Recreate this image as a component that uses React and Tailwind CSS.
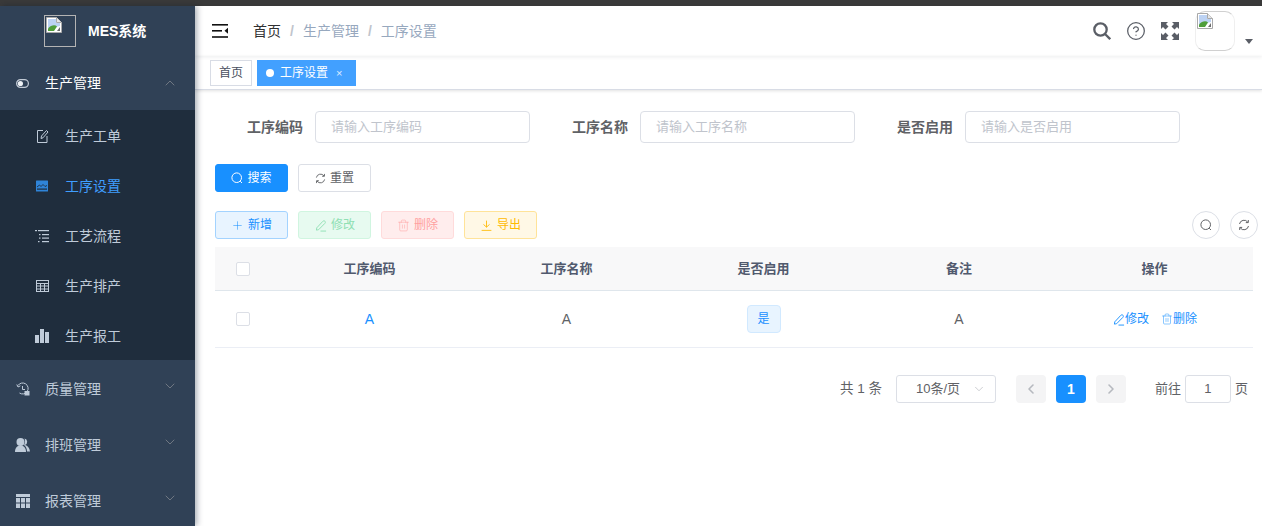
import {
  ChevronDown,
  ChevronUp,
  ChevronLeft,
  ChevronRight,
  Plus,
  Trash2,
  CircleHelp,
} from "lucide-react";

const FONT = "font-['Helvetica_Neue','Liberation_Sans','Noto_Sans_CJK_SC',sans-serif]";

function BrokenImage({ className }) {
  return (
    <svg viewBox="0 0 16 16" className={className}>
      <path d="M0.5 0.5H10.5L15.5 5.5V15.5H0.5Z" fill="#fff" stroke="#a9a9a9" />
      <path d="M10.5 0.5V5.5H15.5" fill="#e6e6e6" stroke="#a9a9a9" />
      <path d="M2 2H10V6H14V9L2 12Z" fill="#bcd2f3" />
      <path d="M2 14V11.5C5 8 9 7.5 11 9.5L8 14Z" fill="#4f9e3a" />
      <path d="M11 14L14 10V14Z" fill="#6d6d6d" />
    </svg>
  );
}

function Pen({ size = 12 }) {
  return (
    <svg width={size} height={size} viewBox="0 0 14 14" fill="none" stroke="currentColor" strokeWidth="1">
      <path d="M3 9.5L9.5 2.5C10.2 1.8 11.2 1.8 11.8 2.4C12.4 3 12.4 4 11.7 4.7L5 11.5L2.6 12Z" />
      <path d="M7 13H13" />
    </svg>
  );
}

function SearchThin({ size = 12 }) {
  return (
    <svg width={size} height={size} viewBox="0 0 12 12" fill="none" stroke="currentColor" strokeWidth="1">
      <circle cx="5.7" cy="5.7" r="4.8" />
      <path d="M9.2 9.2L11 11" />
    </svg>
  );
}

function RefreshThin({ size = 12 }) {
  return (
    <svg width={size} height={size} viewBox="0 0 12 12" fill="none" stroke="currentColor" strokeWidth="1">
      <path d="M1.5 5A4.6 4.6 0 0 1 9.8 3.2" />
      <path d="M10.5 7A4.6 4.6 0 0 1 2.2 8.8" />
      <path d="M10.3 1V3.6H7.8" />
      <path d="M1.7 11V8.4H4.2" />
    </svg>
  );
}

function DownloadThin({ size = 12 }) {
  return (
    <svg width={size} height={size} viewBox="0 0 12 12" fill="none" stroke="currentColor" strokeWidth="0.8">
      <path d="M6 1.5V7.5" />
      <path d="M3.2 5L6 7.5L8.8 5" />
      <path d="M1.5 10.5H10.5" />
    </svg>
  );
}

function ToggleIcon() {
  return (
    <svg width="13" height="9" viewBox="0 0 13 9" fill="none">
      <rect x="0.6" y="0.6" width="11.8" height="7.8" rx="3.9" stroke="#c3cbd6" strokeWidth="1.2" />
      <circle cx="4.4" cy="4.5" r="2.6" fill="#eef1f5" />
    </svg>
  );
}

function OrderIcon() {
  return (
    <svg width="13" height="15" viewBox="0 0 13 15" fill="none" stroke="#bfcbd9" strokeWidth="1">
      <path d="M7 1.5H1.5V13.5H11V7" />
      <path d="M5 9.5L5.5 7L10.5 1.5L12 3L7 8.8Z" />
    </svg>
  );
}

function ProcessIcon() {
  return (
    <svg width="12" height="12" viewBox="0 0 12 12">
      <rect width="12" height="11" y="0.5" rx="0.5" fill="#2f84d8" />
      <path d="M1 7L3.5 5L5 6.5L7 4.5L9 6.5L11 5.5" fill="none" stroke="#1f2d3d" strokeWidth="0.9" />
      <rect x="1" y="8.5" width="10" height="1.2" fill="#1f2d3d" />
    </svg>
  );
}

function FlowIcon() {
  return (
    <svg width="14" height="14" viewBox="0 0 14 14" fill="#bfcbd9">
      <rect x="0" y="1" width="2" height="1.2" />
      <rect x="3" y="1" width="11" height="1.2" />
      <rect x="4" y="5" width="1.5" height="1.2" />
      <rect x="7" y="5" width="7" height="1.2" />
      <rect x="4" y="8.5" width="1.5" height="1.2" />
      <rect x="7" y="8.5" width="7" height="1.2" />
      <rect x="3" y="12" width="1.5" height="1.2" />
      <rect x="7" y="12" width="7" height="1.2" />
    </svg>
  );
}

function PlanIcon() {
  return (
    <svg width="13" height="12" viewBox="0 0 13 12" fill="none" stroke="#bfcbd9" strokeWidth="1">
      <rect x="0.5" y="0.5" width="12" height="11" />
      <path d="M0.5 3.5H12.5M0.5 6H12.5M0.5 9H12.5M4.5 3.5V11.5M8.5 3.5V11.5" />
    </svg>
  );
}

function BarsIcon() {
  return (
    <svg width="14" height="14" viewBox="0 0 14 14" fill="#bfcbd9">
      <rect x="0" y="6" width="4" height="8" />
      <rect x="5" y="0" width="4" height="14" />
      <rect x="10" y="3" width="4" height="11" />
    </svg>
  );
}

function QualityIcon() {
  return (
    <svg width="14" height="14" viewBox="0 0 14 14" fill="none" stroke="#bfcbd9" strokeWidth="1">
      <path d="M2 3.5A5.5 5.5 0 1 1 3.5 11" />
      <path d="M0.8 2.5L2 5L4.4 3.8" />
      <path d="M6.5 4V7.5H9" />
      <rect x="8.5" y="9" width="5" height="4.5" fill="#bfcbd9" stroke="none" />
    </svg>
  );
}

function PeopleIcon() {
  return (
    <svg width="15" height="14" viewBox="0 0 15 14" fill="#bfcbd9">
      <circle cx="5.5" cy="4" r="4" />
      <path d="M0 14C0 10 2 7.5 5.5 7.5C9 7.5 11 10 11 14Z" />
      <path d="M9.5 0.5A3.4 3.4 0 0 1 10 7C12.8 7.7 14.5 10 15 13.5H12C12 10.5 10.5 8 9 7C10 6 10.5 2.5 9.5 0.5Z" />
    </svg>
  );
}

function TableIcon() {
  return (
    <svg width="14" height="14" viewBox="0 0 14 14" fill="#bfcbd9">
      <rect width="14" height="3" />
      <rect y="4" width="4" height="4.5" />
      <rect x="5" y="4" width="4" height="4.5" />
      <rect x="10" y="4" width="4" height="4.5" />
      <rect y="9.5" width="4" height="4.5" />
      <rect x="5" y="9.5" width="4" height="4.5" />
      <rect x="10" y="9.5" width="4" height="4.5" />
    </svg>
  );
}

function FullscreenIcon() {
  return (
    <svg width="18" height="18" viewBox="0 0 18 18" fill="#5a5e66">
      <path d="M0 0H7L5 2L7.5 4.5L4.5 7.5L2 5L0 7Z" />
      <path d="M18 0H11L13 2L10.5 4.5L13.5 7.5L16 5L18 7Z" />
      <path d="M0 18H7L5 16L7.5 13.5L4.5 10.5L2 13L0 11Z" />
      <path d="M18 18H11L13 16L10.5 13.5L13.5 10.5L16 13L18 11Z" />
    </svg>
  );
}

function SearchBold() {
  return (
    <svg width="18" height="18" viewBox="0 0 18 18" fill="none" stroke="#5a5e66" strokeWidth="2.3">
      <circle cx="7.5" cy="7.5" r="6.2" />
      <path d="M12 12L17.2 17.2" />
    </svg>
  );
}

function Hamburger() {
  return (
    <svg width="16" height="14" viewBox="0 0 16 14" fill="#111">
      <rect width="16" height="1.6" y="0" />
      <rect width="10" height="1.6" y="6" />
      <rect width="16" height="1.6" y="12.2" />
      <path d="M16 3.8V9.8L12.5 6.8Z" />
    </svg>
  );
}

const SUB_ITEMS = [
  { label: "生产工单", icon: OrderIcon },
  { label: "工序设置", icon: ProcessIcon, active: true },
  { label: "工艺流程", icon: FlowIcon },
  { label: "生产排产", icon: PlanIcon },
  { label: "生产报工", icon: BarsIcon },
];

const MENU_ITEMS = [
  { label: "质量管理", icon: QualityIcon },
  { label: "排班管理", icon: PeopleIcon },
  { label: "报表管理", icon: TableIcon },
];

const FILTERS = [
  { label: "工序编码", placeholder: "请输入工序编码" },
  { label: "工序名称", placeholder: "请输入工序名称" },
  { label: "是否启用", placeholder: "请输入是否启用" },
];

const TOOLBAR = [
  { label: "新增", icon: Plus, cls: "bg-[#e8f4ff] border-[#a3d3ff] text-[#1890ff]" },
  { label: "修改", icon: Pen, cls: "bg-[#e7faf0] border-[#d0f5e0] text-[#8fe0b3]" },
  { label: "删除", icon: Trash2, cls: "bg-[#ffeded] border-[#ffdbdb] text-[#ffa0a0]" },
  { label: "导出", icon: DownloadThin, cls: "bg-[#fff8e6] border-[#ffe399] text-[#ffba00]" },
];

function Sidebar() {
  return (
    <aside className="w-[195px] shrink-0 bg-[#304156] shadow-[2px_0_6px_rgba(0,21,41,0.35)] z-10 overflow-hidden">
      <div className="h-[50px] flex items-center pl-[44px]">
        <div className="w-8 h-8 border border-[#b4b4b4] p-px">
          <BrokenImage className="w-4 h-4" />
        </div>
        <span className="ml-3 text-[14px] font-bold text-white">MES系统</span>
      </div>
      <div className="h-[54px] flex items-center pl-[16px] pr-[17px] text-[14px] text-white">
        <span className="w-[13px] flex justify-center"><ToggleIcon /></span>
        <span className="ml-4">生产管理</span>
        <ChevronUp size={16} strokeWidth={1} className="ml-auto text-[#909399]" />
      </div>
      <div className="bg-[#1f2d3d]">
        {SUB_ITEMS.map(({ label, icon: Icon, active }) => (
          <div
            key={label}
            className={`h-[50px] pt-[2px] flex items-center pl-[35px] text-[14px] ${active ? "text-[#409eff]" : "text-[#bfcbd9]"}`}
          >
            <span className="w-[14px] flex justify-center"><Icon /></span>
            <span className="ml-4">{label}</span>
          </div>
        ))}
      </div>
      {MENU_ITEMS.map(({ label, icon: Icon }) => (
        <div key={label} className="h-[56px] pt-[2px] flex items-center pl-[15px] pr-[17px] text-[14px] text-[#bfcbd9]">
          <span className="w-[15px] flex justify-center"><Icon /></span>
          <span className="ml-[15px]">{label}</span>
          <ChevronDown size={16} strokeWidth={1} className="ml-auto mb-[6px] text-[#909399]" />
        </div>
      ))}
    </aside>
  );
}

function Header() {
  return (
    <div className="h-[50px] flex items-center pl-[17px] pr-[9px] shadow-[0_1px_4px_rgba(0,21,41,0.08)] relative">
      <Hamburger />
      <div className="ml-[25px] flex items-center text-[14px]">
        <span className="text-[#303133]">首页</span>
        <span className="mx-[9px] text-[#c0c4cc] font-bold">/</span>
        <span className="text-[#97a8be]">生产管理</span>
        <span className="mx-[9px] text-[#c0c4cc] font-bold">/</span>
        <span className="text-[#97a8be]">工序设置</span>
      </div>
      <div className="ml-auto flex items-center text-[#5a5e66]">
        <SearchBold />
        <CircleHelp size={20} strokeWidth={1.5} className="ml-[15px]" />
        <span className="ml-[15px]"><FullscreenIcon /></span>
        <div className="ml-[16px] w-10 h-10 rounded-[10px] border border-[#d0d0d0] border-x-[#efefef] p-px">
          <BrokenImage className="w-4 h-4" />
        </div>
        <span className="ml-[10px] mt-[20px] w-0 h-0 border-x-[4px] border-x-transparent border-t-[5px] border-t-[#5a5e66]" />
      </div>
    </div>
  );
}

function Tabs() {
  return (
    <div className="h-[34px] flex items-start pt-[4px] pl-[15px] gap-[5px] text-[12px] border-b border-[#d8dce5] shadow-[0_1px_3px_rgba(0,0,0,0.12)]">
      <div className="h-[26px] px-[8px] flex items-center bg-white border border-[#d8dce5] text-[#495060]">首页</div>
      <div className="h-[26px] pl-[9px] pr-[14px] flex items-center bg-[#42a0ff] text-white">
        <span className="w-2 h-2 rounded-full bg-white" />
        <span className="ml-[6px]">工序设置</span>
        <span className="ml-[8px] text-[11px] opacity-80">×</span>
      </div>
    </div>
  );
}

function Filters() {
  return (
    <div className="flex gap-[10px]">
      {FILTERS.map(({ label, placeholder }) => (
        <div key={label} className="flex items-center">
          <label className="w-[100px] pr-3 text-right text-[14px] font-bold text-[#606266]">{label}</label>
          <div className="w-[215px] h-8 pl-[15px] flex items-center rounded border border-[#dcdfe6] text-[13px] text-[#c0c4cc]">
            {placeholder}
          </div>
        </div>
      ))}
    </div>
  );
}

function Btn({ children, className }) {
  return (
    <button className={`w-[73px] h-7 rounded-[3px] border flex items-center justify-center gap-[4px] text-[12px] ${className}`}>
      {children}
    </button>
  );
}

function Checkbox() {
  return <span className="block w-[14px] h-[14px] rounded-[2px] border border-[#dcdfe6] bg-white" />;
}

function DataTable() {
  return (
    <div className="mt-2 mr-[5px] text-[13px] text-[#606266]">
      <div className="h-11 grid grid-cols-[56px_197px_197px_197px_194px_1fr] items-center bg-[#f8f8f9] border-b border-[#dfe6ec] text-center font-bold text-[#515a6e]">
        <div className="flex justify-center"><Checkbox /></div>
        <div>工序编码</div>
        <div>工序名称</div>
        <div>是否启用</div>
        <div>备注</div>
        <div>操作</div>
      </div>
      <div className="h-[57px] grid grid-cols-[56px_197px_197px_197px_194px_1fr] items-center border-b border-[#ebeef5] text-center">
        <div className="flex justify-center"><Checkbox /></div>
        <div className="text-[#1890ff] text-[14px]">A</div>
        <div className="text-[14px]">A</div>
        <div className="flex justify-center">
          <span className="h-7 w-[34px] rounded bg-[#e8f4ff] border border-[#d1e9ff] text-[#1890ff] text-[12px] flex items-center justify-center">是</span>
        </div>
        <div className="text-[14px]">A</div>
        <div className="flex items-center justify-center gap-3 text-[12px] text-[#1890ff]">
          <span className="flex items-center"><Pen size={13} />修改</span>
          <span className="flex items-center"><Trash2 size={12} strokeWidth={1} />删除</span>
        </div>
      </div>
    </div>
  );
}

function Pagination() {
  return (
    <div className="mt-[27px] pr-[10px] h-7 flex items-center justify-end text-[13px] text-[#606266]">
      <span className="text-[13.5px]">共 1 条</span>
      <div className="ml-[14px] w-[100px] h-7 pl-[19px] pr-[9px] rounded-[3px] border border-[#dcdfe6] flex items-center justify-between">
        <span>10条/页</span>
        <ChevronDown size={14} strokeWidth={1} className="text-[#a8abb2]" />
      </div>
      <span className="ml-5 w-[30px] h-7 rounded-sm bg-[#f4f4f5] flex items-center justify-center text-[#b6b9bf]">
        <ChevronLeft size={16} strokeWidth={2.4} />
      </span>
      <span className="ml-[10px] w-[30px] h-7 rounded-sm bg-[#1890ff] flex items-center justify-center text-white font-bold text-[14px]">1</span>
      <span className="ml-[10px] w-[30px] h-7 rounded-sm bg-[#f4f4f5] flex items-center justify-center text-[#b6b9bf]">
        <ChevronRight size={16} strokeWidth={2.4} />
      </span>
      <span className="ml-[29px]">前往</span>
      <span className="mx-1 w-[46px] h-7 rounded-[3px] border border-[#dcdfe6] flex items-center justify-center">1</span>
      <span>页</span>
    </div>
  );
}

export default function App() {
  return (
    <div className={`h-[526px] overflow-hidden flex flex-col bg-white ${FONT}`}>
      <div className="h-[6px] shrink-0 bg-[#3a3a3a]" />
      <div className="flex-1 flex min-h-0">
        <Sidebar />
        <main className="flex-1 min-w-0">
          <Header />
          <Tabs />
          <div className="pl-5 pr-1 pt-[21px]">
            <Filters />
            <div className="mt-[21px] flex gap-[10px]">
              <Btn className="bg-[#1890ff] border-[#1890ff] text-white">
                <SearchThin />
                搜索
              </Btn>
              <Btn className="bg-white border-[#dcdfe6] text-[#606266]">
                <RefreshThin size={11} />
                重置
              </Btn>
            </div>
            <div className="mt-[19px] flex items-center gap-[10px]">
              {TOOLBAR.map(({ label, icon: Icon, cls }) => (
                <Btn key={label} className={cls}>
                  <Icon size={13} strokeWidth={1} />
                  {label}
                </Btn>
              ))}
              <button className="ml-auto w-7 h-7 rounded-full border border-[#dcdfe6] flex items-center justify-center text-[#606266]">
                <SearchThin />
              </button>
              <button className="w-7 h-7 rounded-full border border-[#dcdfe6] flex items-center justify-center text-[#606266]">
                <RefreshThin />
              </button>
            </div>
            <DataTable />
            <Pagination />
          </div>
        </main>
      </div>
    </div>
  );
}
